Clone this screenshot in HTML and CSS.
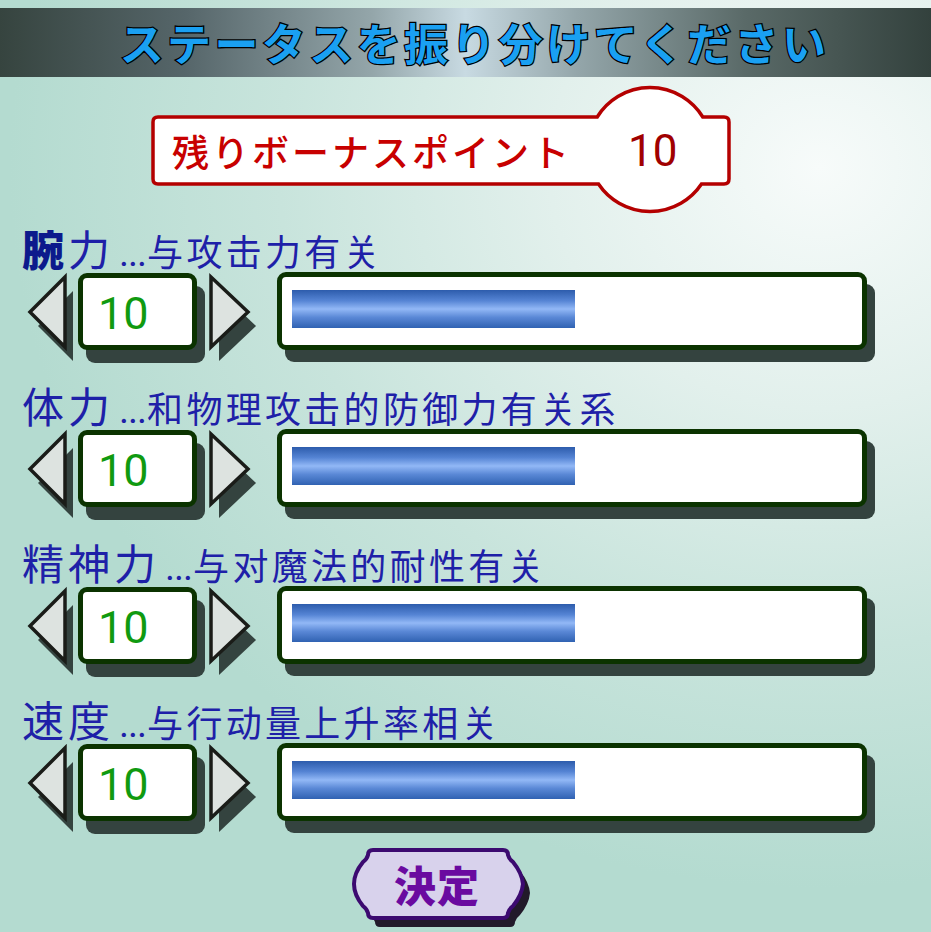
FILE: index.html
```html
<!DOCTYPE html>
<html lang="ja">
<head>
  <meta charset="UTF-8" />
  <title>ステータス振り分け</title>
  <link rel="stylesheet" href="styles.css">
</head>
<body>

  <!-- Title bar -->
  <div class="title-bar">
    <h1>ステータスを振り分けてください</h1>
  </div>

  <!-- Remaining bonus points -->
  <div class="bonus">
    <svg class="bonus-plate" viewBox="0 0 580 127" aria-hidden="true">
      <path d="M7,31 H446.2 A62,62 0 0 1 551.8,31 H573 Q578,31 578,36 V93 Q578,98 573,98 H550.5 A62,62 0 0 1 447.5,98 H7 Q2,98 2,93 V36 Q2,31 7,31 Z"/>
    </svg>
    <span class="bonus-label">残りボーナスポイント</span>
    <span class="bonus-value">10</span>
  </div>

  <!-- Stats -->
  <div class="stats">

    <div class="stat">
      <div class="stat-label"><span class="stat-name"><b>腕</b>力</span><span class="dots">...</span><span class="stat-desc">与攻击力有关</span></div>
      <div class="stat-controls">
        <button class="arrow arrow-left" aria-label="減らす">
          <svg width="48" height="92" viewBox="0 0 48 92"><polygon class="arrow-shadow" points="11,54 46,19 46,89"/><polygon class="arrow-face" points="3,40 38,5 38,75"/></svg>
        </button>
        <div class="stat-value">10</div>
        <button class="arrow arrow-right" aria-label="増やす">
          <svg width="52" height="92" viewBox="0 0 52 92"><polygon class="arrow-shadow" points="12,19 12,89 49,54"/><polygon class="arrow-face" points="4,5 4,75 41,40"/></svg>
        </button>
        <div class="gauge"><div class="gauge-fill" style="width: 283px"></div></div>
      </div>
    </div>

    <div class="stat">
      <div class="stat-label"><span class="stat-name">体力</span><span class="dots">...</span><span class="stat-desc">和物理攻击的防御力有关系</span></div>
      <div class="stat-controls">
        <button class="arrow arrow-left" aria-label="減らす">
          <svg width="48" height="92" viewBox="0 0 48 92"><polygon class="arrow-shadow" points="11,54 46,19 46,89"/><polygon class="arrow-face" points="3,40 38,5 38,75"/></svg>
        </button>
        <div class="stat-value">10</div>
        <button class="arrow arrow-right" aria-label="増やす">
          <svg width="52" height="92" viewBox="0 0 52 92"><polygon class="arrow-shadow" points="12,19 12,89 49,54"/><polygon class="arrow-face" points="4,5 4,75 41,40"/></svg>
        </button>
        <div class="gauge"><div class="gauge-fill" style="width: 283px"></div></div>
      </div>
    </div>

    <div class="stat">
      <div class="stat-label"><span class="stat-name">精神力</span><span class="dots">...</span><span class="stat-desc">与对魔法的耐性有关</span></div>
      <div class="stat-controls">
        <button class="arrow arrow-left" aria-label="減らす">
          <svg width="48" height="92" viewBox="0 0 48 92"><polygon class="arrow-shadow" points="11,54 46,19 46,89"/><polygon class="arrow-face" points="3,40 38,5 38,75"/></svg>
        </button>
        <div class="stat-value">10</div>
        <button class="arrow arrow-right" aria-label="増やす">
          <svg width="52" height="92" viewBox="0 0 52 92"><polygon class="arrow-shadow" points="12,19 12,89 49,54"/><polygon class="arrow-face" points="4,5 4,75 41,40"/></svg>
        </button>
        <div class="gauge"><div class="gauge-fill" style="width: 283px"></div></div>
      </div>
    </div>

    <div class="stat">
      <div class="stat-label"><span class="stat-name">速度</span><span class="dots">...</span><span class="stat-desc">与行动量上升率相关</span></div>
      <div class="stat-controls">
        <button class="arrow arrow-left" aria-label="減らす">
          <svg width="48" height="92" viewBox="0 0 48 92"><polygon class="arrow-shadow" points="11,54 46,19 46,89"/><polygon class="arrow-face" points="3,40 38,5 38,75"/></svg>
        </button>
        <div class="stat-value">10</div>
        <button class="arrow arrow-right" aria-label="増やす">
          <svg width="52" height="92" viewBox="0 0 52 92"><polygon class="arrow-shadow" points="12,19 12,89 49,54"/><polygon class="arrow-face" points="4,5 4,75 41,40"/></svg>
        </button>
        <div class="gauge"><div class="gauge-fill" style="width: 283px"></div></div>
      </div>
    </div>

  </div>

  <!-- Confirm button -->
  <button class="decide">
    <svg class="decide-shape" viewBox="0 0 182 82" aria-hidden="true">
      <path class="decide-shadow" transform="translate(7,9)" d="M21,2 H151 Q156,2 156,7 Q157,11 161,14 Q170,25 171,36 Q170,47 161,58 Q157,61 156,65 Q156,70 151,70 H21 Q16,70 16,65 Q15,61 11,58 Q2,47 2,36 Q2,25 11,14 Q15,11 16,7 Q16,2 21,2 Z"/>
      <path class="decide-face" d="M21,2 H151 Q156,2 156,7 Q157,11 161,14 Q170,25 171,36 Q170,47 161,58 Q157,61 156,65 Q156,70 151,70 H21 Q16,70 16,65 Q15,61 11,58 Q2,47 2,36 Q2,25 11,14 Q15,11 16,7 Q16,2 21,2 Z"/>
    </svg>
    <span class="decide-text">決定</span>
  </button>

</body>
</html>
```

FILE: styles.css
```css
html, body {
  height: 932px;
}

body {
  margin: 0;
  overflow: hidden;
  font-family: 'Noto Sans CJK JP', 'Noto Sans CJK SC', sans-serif;
  background: radial-gradient(ellipse 900px 800px at 88% 18%, #f7fbfa 0%, #e2f0ec 30%, #c8e4dc 60%, #b4dbd0 90%);
}

/* ---- title ---- */

.title-bar {
  margin-top: 8px;
  height: 69px;
  display: flex;
  align-items: center;
  justify-content: center;
  padding-left: 18px;
  background: linear-gradient(90deg, #36443f 0%, #56666a 20%, #94a6aa 40%, #c8dae2 50%, #94a6aa 62%, #5a6a68 80%, #33413d 100%);
}

.title-bar h1 {
  margin: 0;
  font-size: 44px;
  font-weight: 700;
  letter-spacing: 3.4px;
  line-height: 69px;
  color: #1aa0f2;
  -webkit-text-stroke: 2.5px #000;
  paint-order: stroke fill;
}

/* ---- bonus plate ---- */

.bonus {
  position: relative;
  width: 580px;
  height: 127px;
  margin: 9px 0 0 151px;
  display: flex;
  align-items: center;
}

.bonus-plate {
  position: absolute;
  left: 0;
  top: 0;
  width: 580px;
  height: 127px;
  overflow: visible;
}

.bonus-plate path {
  fill: #fff;
  stroke: #b40000;
  stroke-width: 3.5;
}

.bonus-label {
  position: relative;
  padding-left: 21px;
  font-size: 37px;
  font-weight: 500;
  letter-spacing: 3px;
  color: #c80000;
  margin-top: 2px;
}

.bonus-value {
  position: relative;
  margin-left: 56px;
  font-family: Roboto, sans-serif;
  font-size: 44px;
  color: #a00000;
  margin-top: 2px;
}

/* ---- stat rows ---- */

.stats {
  margin-top: 13px;
  display: flex;
  flex-direction: column;
  gap: 33px;
}

.stat-label {
  height: 44px;
  line-height: 44px;
  padding-left: 22px;
  margin-bottom: 2px;
  font-family: 'Noto Sans CJK SC', sans-serif;
  color: #1e20a8;
  white-space: nowrap;
}

.stat-name {
  font-size: 42px;
  letter-spacing: 4px;
}

.stat-name b {
  font-weight: 900;
  color: #0c1a8c;
}

.dots {
  font-family: Roboto, sans-serif;
  font-size: 38px;
  letter-spacing: -1px;
  margin: 0 1px 0 5px;
}

.stat-desc {
  font-size: 36px;
  letter-spacing: 3.3px;
}

.stat-controls {
  height: 78px;
  display: flex;
  align-items: flex-start;
  padding-left: 27px;
}

.arrow {
  border: none;
  background: none;
  padding: 0;
  cursor: pointer;
  display: block;
}

.arrow svg {
  display: block;
  overflow: visible;
}

.arrow-shadow {
  fill: #34433f;
}

.arrow-face {
  fill: #dde3e0;
  stroke: #1a1c18;
  stroke-width: 3.5;
  stroke-linejoin: miter;
}

.arrow-right {
  margin-left: 10px;
}

.stat-value {
  box-sizing: border-box;
  width: 119px;
  height: 77px;
  margin-left: 3px;
  margin-top: 1px;
  padding: 4px 0 0 15px;
  display: flex;
  align-items: center;
  background: #fff;
  border: 5px solid #0b3300;
  border-radius: 9px;
  box-shadow: 8px 13px 0 #34433f;
  font-family: Roboto, sans-serif;
  font-size: 45px;
  color: #109a10;
}

.gauge {
  box-sizing: border-box;
  width: 590px;
  height: 78px;
  margin-left: 18px;
  padding: 13px 0 0 10px;
  background: #fff;
  border: 5px solid #0b3300;
  border-radius: 9px;
  box-shadow: 8px 12px 0 #34433f;
}

.gauge-fill {
  height: 38px;
  background: linear-gradient(180deg, #2d5cac 0%, #5584d4 28%, #92b8f6 50%, #5a88d6 72%, #3062b2 100%);
}

/* ---- confirm ---- */

.decide {
  position: relative;
  display: flex;
  align-items: center;
  justify-content: center;
  width: 182px;
  height: 82px;
  margin: 27px 0 0 352px;
  padding: 0 12px 12px 0;
  border: none;
  background: none;
  cursor: pointer;
}

.decide-shape {
  position: absolute;
  left: 0;
  top: 0;
  width: 182px;
  height: 82px;
  overflow: visible;
}

.decide-shadow {
  fill: #221a2a;
}

.decide-face {
  fill: #d8d2ec;
  stroke: #3c0a70;
  stroke-width: 4;
}

.decide-text {
  position: relative;
  font-family: 'Noto Sans CJK JP', sans-serif;
  font-size: 42px;
  font-weight: 900;
  color: #6a0aa0;
  letter-spacing: 1px;
}
```
